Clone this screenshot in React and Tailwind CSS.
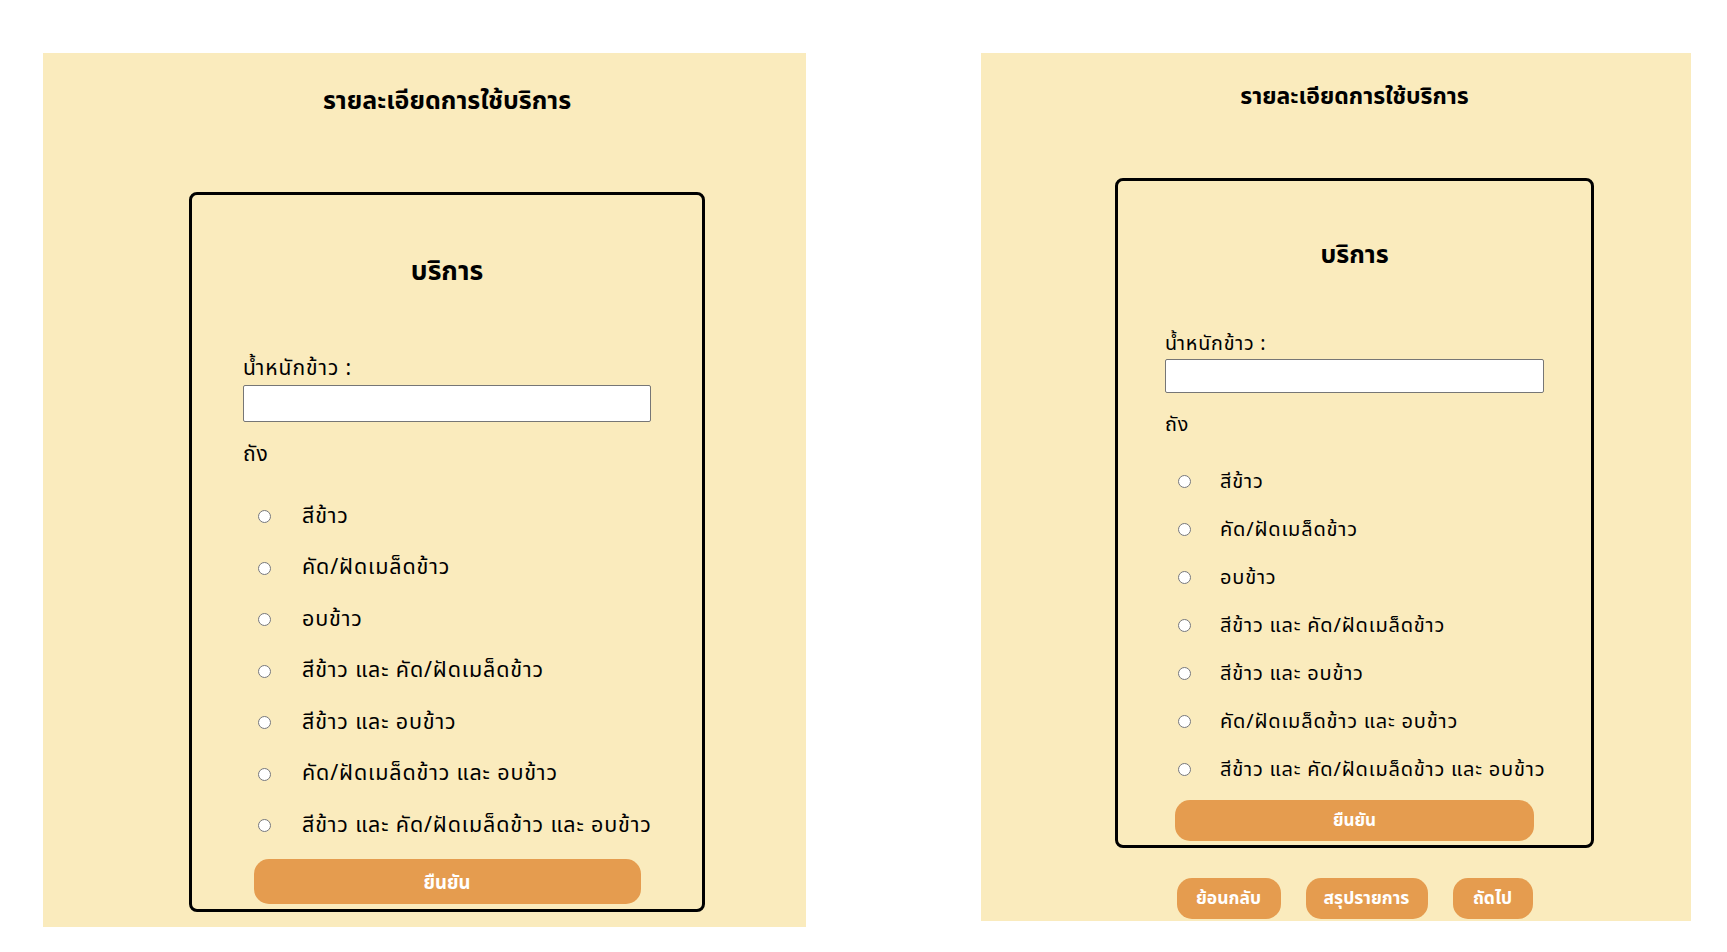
const options = [
  "สีข้าว",
  "คัด/ฝัดเมล็ดข้าว",
  "อบข้าว",
  "สีข้าว และ คัด/ฝัดเมล็ดข้าว",
  "สีข้าว และ อบข้าว",
  "คัด/ฝัดเมล็ดข้าว และ อบข้าว",
  "สีข้าว และ คัด/ฝัดเมล็ดข้าว และ อบข้าว",
]

const LeftPanel = () => (
  <div className="w-[763px] h-[874px] bg-[#faebbd] pl-[45px] flex flex-col items-center shrink-0">
    <h1 className="pt-[32px] text-[25px] leading-[32px] font-bold text-black">รายละเอียดการใช้บริการ</h1>

    <div className="mt-[75px] w-[516px] h-[720px] border-[3px] border-black rounded-[8px] px-[51px] pb-[5px] flex flex-col">
      <h2 className="pt-[59px] text-[26.5px] leading-[36px] font-bold text-center">บริการ</h2>

      <label className="mt-[65px] text-[21px] leading-[28px] tracking-[0.045em]">น้ำหนักข้าว :</label>
      <input type="text" className="mt-[2px] h-[37px] w-full bg-white border border-[#767676] rounded-[2px]" />

      <p className="mt-[19px] text-[21px] leading-[28px] tracking-[0.045em]">ถัง</p>

      <div className="mt-[22px] flex flex-col">
        {options.map((opt) => (
          <label key={opt} className="h-[51.5px] flex items-center text-[21.5px] tracking-[0.04em] whitespace-nowrap">
            <input type="radio" name="service-left" className="ml-[15px] w-[13px] h-[13px] m-0 shrink-0" />
            <span className="ml-[31px]">{opt}</span>
          </label>
        ))}
      </div>

      <button className="mt-[7px] self-center w-[387px] h-[45px] pt-[6px] rounded-[15px] bg-[#e59c4f] text-white text-[18.5px] font-bold">
        ยืนยัน
      </button>
    </div>
  </div>
)

const RightPanel = () => (
  <div className="w-[710px] h-[868px] bg-[#faebbd] pl-[37px] flex flex-col items-center shrink-0">
    <h1 className="pt-[29px] text-[23px] leading-[30px] font-bold text-black">รายละเอียดการใช้บริการ</h1>

    <div className="mt-[66px] w-[479px] h-[670px] border-[3px] border-black rounded-[8px] px-[47px] pb-[4px] flex flex-col">
      <h2 className="pt-[57px] text-[25px] leading-[34px] font-bold text-center">บริการ</h2>

      <label className="mt-[59px] text-[19.7px] leading-[26px] tracking-[0.04em]">น้ำหนักข้าว :</label>
      <input type="text" className="mt-[2px] h-[34px] w-full bg-white border border-[#767676] rounded-[2px]" />

      <p className="mt-[19px] text-[19.7px] leading-[26px] tracking-[0.04em]">ถัง</p>

      <div className="mt-[20px] flex flex-col">
        {options.map((opt) => (
          <label key={opt} className="h-[48px] flex items-center text-[20px] tracking-[0.04em] whitespace-nowrap">
            <input type="radio" name="service-right" className="ml-[13px] w-[13px] h-[13px] m-0 shrink-0" />
            <span className="ml-[29px]">{opt}</span>
          </label>
        ))}
      </div>

      <button className="mt-[6px] self-center w-[359px] h-[42px] pt-[2px] rounded-[15px] bg-[#e59c4f] text-white text-[17px] font-bold">
        ยืนยัน
      </button>
    </div>

    <div className="mt-[30px] flex gap-[25px] text-white text-[17.5px] font-bold">
      <button className="w-[104px] h-[41px] pt-[2px] rounded-[15px] bg-[#e59c4f]">ย้อนกลับ</button>
      <button className="w-[122px] h-[41px] pt-[2px] rounded-[15px] bg-[#e59c4f]">สรุปรายการ</button>
      <button className="w-[80px] h-[41px] pt-[2px] rounded-[15px] bg-[#e59c4f]">ถัดไป</button>
    </div>
  </div>
)

export default function App() {
  return (
    <div
      className="w-[1727px] h-[952px] bg-white pt-[53px] pl-[43px] flex items-start gap-[175px] text-black"
      style={{ fontFamily: '"Noto Sans Thai", "Noto Sans", "DejaVu Sans", sans-serif' }}
    >
      <LeftPanel />
      <RightPanel />
    </div>
  )
}
